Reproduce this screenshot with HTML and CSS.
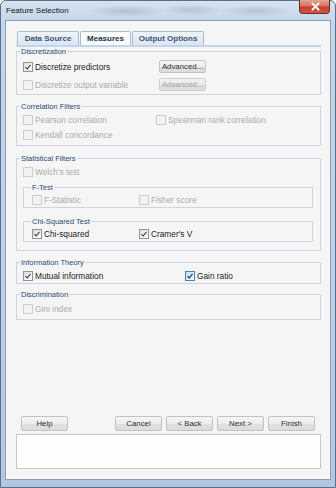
FILE: index.html
```html
<!DOCTYPE html>
<html>
<head>
<meta charset="utf-8">
<title>Feature Selection</title>
<link rel="stylesheet" href="styles.css">
</head>
<body>
<div class="window">
  <div class="titlebar">
    <span class="title">Feature Selection</span>
    <span class="close"><svg width="31" height="13" viewBox="0 0 31 13"><path d="M12.5 3.5 L18.5 9.5 M18.5 3.5 L12.5 9.5" stroke="#fff" stroke-width="2" stroke-linecap="round" fill="none"/></svg></span>
  </div>
  <div class="client">
    <div class="tabs">
      <div class="tab t1">Data Source</div>
      <div class="tab t2 active">Measures</div>
      <div class="tab t3">Output Options</div>
    </div>
    <div class="panel">
      <fieldset class="group g-disc">
        <legend>Discretization</legend>
        <div class="rows cols-disc">
          <label class="chk"><span class="box checked"><svg width="8" height="8" viewBox="0 0 8 8"><path d="M1.5 4.2 L3.2 6 L6.5 1.8" stroke="#333d4f" stroke-width="1.1" fill="none"/></svg></span>Discretize predictors</label>
          <button class="btn adv">Advanced...</button>
          <label class="chk disabled"><span class="box"></span>Discretize output variable</label>
          <button class="btn adv" disabled>Advanced...</button>
        </div>
      </fieldset>

      <fieldset class="group g-corr">
        <legend>Correlation Filters</legend>
        <div class="rows cols-corr">
          <label class="chk disabled"><span class="box"></span>Pearson correlation</label>
          <label class="chk disabled"><span class="box"></span>Spearman rank correlation</label>
          <label class="chk disabled"><span class="box"></span>Kendall concordance</label>
        </div>
      </fieldset>

      <fieldset class="group g-stat">
        <legend>Statistical Filters</legend>
        <label class="chk disabled"><span class="box"></span>Welch's test</label>
        <fieldset class="sub s-f">
          <legend>F-Test</legend>
          <div class="rows cols-sub">
            <label class="chk disabled"><span class="box"></span>F-Statistic</label>
            <label class="chk disabled"><span class="box"></span>Fisher score</label>
          </div>
        </fieldset>
        <fieldset class="sub s-chi">
          <legend>Chi-Squared Test</legend>
          <div class="rows cols-sub">
            <label class="chk"><span class="box checked"><svg width="8" height="8" viewBox="0 0 8 8"><path d="M1.5 4.2 L3.2 6 L6.5 1.8" stroke="#333d4f" stroke-width="1.1" fill="none"/></svg></span>Chi-squared</label>
            <label class="chk"><span class="box checked"><svg width="8" height="8" viewBox="0 0 8 8"><path d="M1.5 4.2 L3.2 6 L6.5 1.8" stroke="#333d4f" stroke-width="1.1" fill="none"/></svg></span>Cramer's V</label>
          </div>
        </fieldset>
      </fieldset>

      <fieldset class="group g-info">
        <legend>Information Theory</legend>
        <div class="rows cols-info">
          <label class="chk"><span class="box checked"><svg width="8" height="8" viewBox="0 0 8 8"><path d="M1.5 4.2 L3.2 6 L6.5 1.8" stroke="#333d4f" stroke-width="1.1" fill="none"/></svg></span>Mutual information</label>
          <label class="chk"><span class="box checked hot"><svg width="8" height="8" viewBox="0 0 8 8"><path d="M1.5 4.2 L3.2 6 L6.5 1.8" stroke="#1f3d66" stroke-width="1.2" fill="none"/></svg></span>Gain ratio</label>
        </div>
      </fieldset>

      <fieldset class="group g-discr">
        <legend>Discrimination</legend>
        <label class="chk disabled"><span class="box"></span>Gini index</label>
      </fieldset>
    </div>

    <div class="actions">
      <button class="btn big help">Help</button>
      <button class="btn big">Cancel</button>
      <button class="btn big">&lt; Back</button>
      <button class="btn big">Next &gt;</button>
      <button class="btn big">Finish</button>
    </div>
    <div class="status"></div>
  </div>
</div>
</body>
</html>
```

FILE: styles.css
```css
html, body {
  margin: 0;
  padding: 0;
}
body {
  width: 336px;
  height: 488px;
  overflow: hidden;
  background: #ffffff;
  font-family: "Liberation Sans", Arial, sans-serif;
}

.window {
  box-sizing: border-box;
  width: 336px;
  height: 488px;
  border: 1px solid #5c6f88;
  border-radius: 6px 6px 0 0;
  background:
    radial-gradient(ellipse 40px 6px at 125px 10px, rgba(120,140,165,0.35), transparent),
    radial-gradient(ellipse 30px 6px at 190px 9px, rgba(120,140,165,0.3), transparent),
    radial-gradient(ellipse 35px 6px at 255px 10px, rgba(120,140,165,0.3), transparent),
    linear-gradient(180deg, #d6e3f0 0px, #c5d7ea 20px, #bcd0e6 60%, #b2c8e0 100%);
  padding: 0 4px 7px 4px;
  display: flex;
  flex-direction: column;
}

.titlebar {
  height: 19px;
  display: flex;
  justify-content: space-between;
  align-items: flex-start;
}
.title {
  font-size: 8px;
  line-height: 19px;
  padding-left: 1px;
  color: #141414;
}
.close {
  display: block;
  width: 31px;
  height: 14px;
  margin-top: -1px;
  margin-right: 1px;
  box-sizing: border-box;
  border: 1px solid #6e2a22;
  border-top: none;
  border-radius: 0 0 4px 4px;
  background: linear-gradient(180deg, #e7a495 0%, #d6735f 45%, #c5402a 55%, #d0593f 100%);
}
.close svg {
  display: block;
}

.client {
  flex: 1;
  border: 1px solid #8c9eb4;
  background: #f5f5f5;
  padding: 10px 9px 10px 10px;
  display: flex;
  flex-direction: column;
}

.tabs {
  display: flex;
  gap: 1px;
  padding-left: 1px;
  height: 14px;
  border-bottom: 2px solid #c3d5e9;
}
.tab {
  box-sizing: border-box;
  height: 14px;
  border: 1px solid #a9bcd2;
  border-bottom: none;
  border-radius: 2px 2px 0 0;
  font-size: 8px;
  font-weight: bold;
  line-height: 13px;
  text-align: center;
  color: #3d5377;
  background: linear-gradient(180deg, #eef3f9 0%, #dbe6f2 100%);
}
.t1 { width: 62px; }
.t2 { width: 51px; }
.t3 { width: 72px; }
.tab.active {
  background: #fafbfd;
  color: #25324b;
}

.panel {
  flex: 1;
  display: flex;
  flex-direction: column;
}

fieldset {
  margin: 0;
  min-width: 0;
  border: 1px solid #cfd4da;
}
legend {
  font-size: 7.5px;
  line-height: 9px;
  color: #2c4877;
  padding: 0 1px;
  margin-left: -3px;
}

.g-disc  { padding: 4px 0 3px 6px; }
.g-corr  { margin-top: 7px; padding: 3px 0 4px 6px; }
.g-stat  { margin-top: 8px; padding: 3px 7px 8px 6px; }
.g-info  { margin-top: 7px; padding: 3px 0 1px 6px; }
.g-discr { margin-top: 6px; padding: 4px 0 4px 6px; }

.sub legend { margin-left: -1px; }
.s-f   { margin-top: 5px; padding: 2px 0 1px 8px; }
.s-chi { margin-top: 9px; padding: 2px 0 1px 8px; }

.rows {
  display: grid;
  align-items: center;
  row-gap: 3px;
}
.cols-disc { grid-template-columns: 136px 47px; row-gap: 5px; }
.cols-corr { grid-template-columns: 133px auto; }
.cols-sub  { grid-template-columns: 107px auto; }
.cols-info { grid-template-columns: 162px auto; }

.chk {
  display: flex;
  align-items: center;
  height: 12px;
  font-size: 8.3px;
  line-height: 12px;
  color: #222222;
  white-space: nowrap;
}
.chk.disabled {
  color: #ababab;
}
.box {
  box-sizing: border-box;
  width: 10px;
  height: 10px;
  margin-right: 2px;
  border: 1px solid #cdcdcd;
  background: #f2f2f2;
  display: flex;
  align-items: center;
  justify-content: center;
  flex: none;
}
.box.checked {
  border-color: #939393;
  background: linear-gradient(135deg, #dadada 0%, #f3f3f3 60%, #ffffff 100%);
}
.box.hot {
  border-color: #4584b8;
  background: linear-gradient(135deg, #bfdff6 0%, #dff0fc 60%, #eef8fe 100%);
}
.box svg {
  display: block;
}

.btn {
  box-sizing: border-box;
  width: 47px;
  margin: 0;
  padding: 0;
  border: 1px solid #c3c3c3;
  border-radius: 2px;
  background: linear-gradient(180deg, #f6f6f6 0%, #ececec 50%, #e0e0e0 51%, #dcdcdc 100%);
  font-family: "Liberation Sans", Arial, sans-serif;
  font-size: 7.8px;
  color: #2e2e2e;
}
.btn.adv {
  height: 13px;
  line-height: 11px;
}
.btn[disabled] {
  color: #a3a3a3;
  background: linear-gradient(180deg, #f1f1f1 0%, #e8e8e8 50%, #dfdfdf 51%, #dddddd 100%);
  border-color: #d0d0d0;
}
.btn.big {
  height: 15px;
  line-height: 13px;
}

.actions {
  display: flex;
  gap: 4px;
  height: 15px;
  padding: 0 6px 0 5px;
}
.actions .help {
  margin-right: auto;
}

.status {
  margin-top: 3px;
  height: 35px;
  box-sizing: border-box;
  border: 1px solid #c6c6c6;
  background: #fdfdfd;
}
```
